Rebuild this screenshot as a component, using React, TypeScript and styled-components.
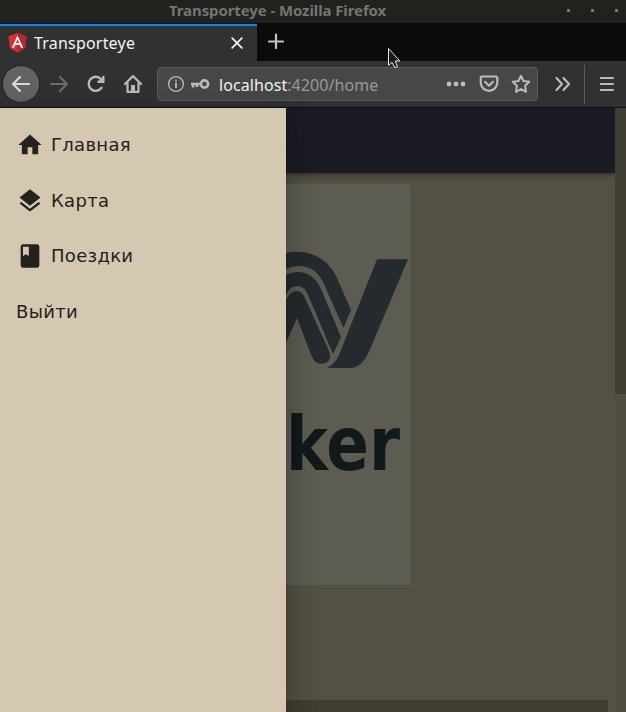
import React from "react";
import styled, { createGlobalStyle } from "styled-components";

const GlobalStyle = createGlobalStyle`
  *, *::before, *::after { box-sizing: border-box; }
  body { margin: 0; overflow: hidden; background: #535044; }
  svg { display: block; }
`;

const Window = styled.div`
  position: relative;
  display: flex;
  flex-direction: column;
  width: 626px;
  height: 712px;
  overflow: hidden;
  font-family: "Noto Sans", sans-serif;
`;

const TitleBar = styled.header`
  display: flex;
  align-items: center;
  height: 23px;
  flex: none;
  padding-left: 169px;
  background: #21211e;
  color: #747471;
`;

const WindowTitle = styled.div`
  width: 384px;
  padding-bottom: 4px;
  font-size: 15px;
  font-weight: 700;
  line-height: 22px;
  letter-spacing: -0.1px;
  white-space: nowrap;
`;

const WindowControls = styled.div`
  display: flex;
  gap: 21px;
  margin: -2px 0 0 14px;
`;

const WindowDot = styled.i`
  width: 3px;
  height: 3px;
  background: #777874;
`;

const TabStrip = styled.div`
  display: flex;
  height: 38px;
  flex: none;
  padding-top: 1px;
  background: #0a0c0b;
`;

const Tab = styled.div`
  display: flex;
  align-items: center;
  width: 257px;
  height: 37px;
  padding: 0 14px 2px 8px;
  border-top: 2px solid #0a84ff;
  background: #303231;
  color: #f3f4f3;
`;

const TabTitle = styled.span`
  flex: 1;
  padding-left: 7px;
  font-size: 16px;
  line-height: 22px;
  letter-spacing: 0.2px;
`;

const NewTab = styled.div`
  padding: 9px 0 0 11px;
`;

const Toolbar = styled.nav`
  display: flex;
  align-items: center;
  height: 47px;
  flex: none;
  border-bottom: 1px solid #101110;
  background: #303231;
  color: #b9bbb9;
`;

const BackButton = styled.div`
  display: grid;
  place-items: center;
  width: 38px;
  height: 38px;
  margin-left: 2px;
  border: 1px solid #232524;
  border-radius: 50%;
  background: #626463;
  color: #d8dad8;
`;

const ToolIcon = styled.div<{ $left: number; $dim?: boolean }>`
  margin-left: ${(p) => p.$left}px;
  color: ${(p) => (p.$dim ? "#6c6e6d" : "inherit")};
`;

const AddressBar = styled.div`
  display: flex;
  align-items: center;
  width: 381px;
  height: 34px;
  margin-left: 14px;
  padding-left: 9px;
  border: 1px solid #5b5d5c;
  border-radius: 4px;
  background: #464847;
`;

const Address = styled.div`
  width: 222px;
  margin-left: 9px;
  padding-top: 2px;
  color: #989a99;
  font-size: 16px;
  line-height: 24px;
  letter-spacing: 0.07px;
`;

const Host = styled.span`
  color: #f2f3f2;
`;

const ToolDivider = styled.div`
  width: 1px;
  height: 39px;
  margin-left: 12px;
  background: #5b5d5c;
`;

const Viewport = styled.main`
  position: relative;
  display: flex;
  flex: 1;
  min-height: 0;
  background: #535044;
`;

const Page = styled.div`
  display: flex;
  flex-direction: column;
  width: 615px;
`;

const AppBar = styled.div`
  height: 65px;
  flex: none;
  background: #1a1b25;
  box-shadow: 0 2px 5px rgba(25, 24, 18, 0.55);
`;

const LogoCard = styled.div`
  width: 410px;
  height: 401px;
  margin-top: 11px;
  flex: none;
  padding-left: 286px;
  border-radius: 4px 4px 0 0;
  background: #5d5c53;
`;

const Footer = styled.div`
  width: 608px;
  height: 12px;
  margin-top: auto;
  background: #403e33;
`;

const ScrollTrack = styled.div`
  width: 11px;
  background: #504e42;
`;

const ScrollThumb = styled.div`
  height: 286px;
  background: #403e33;
`;

const Drawer = styled.aside`
  position: absolute;
  top: 0;
  bottom: 0;
  left: 0;
  display: flex;
  flex-direction: column;
  width: 286px;
  padding: 9.2px 16px;
  background: #d4c8b0;
  box-shadow: 0 8px 10px -5px rgba(0, 0, 0, 0.2), 0 16px 24px 2px rgba(0, 0, 0, 0.14), 0 6px 30px 5px rgba(0, 0, 0, 0.12);
`;

const MenuItem = styled.a`
  display: flex;
  align-items: center;
  gap: 7px;
  height: 55.6px;
  color: #22221e;
  font: 18px/28px "DejaVu Sans", sans-serif;
  letter-spacing: 0.3px;
`;

const Pointer = styled.svg`
  position: absolute;
  left: 387px;
  top: 47px;
`;

const Line = ({ d, size = 20, width = 2.2 }: { d: string; size?: number; width?: number }) => (
  <svg width={size} height={size} viewBox="0 0 20 20" fill="none" stroke="currentColor" strokeWidth={width} strokeLinecap="round" strokeLinejoin="round">
    <path d={d} />
  </svg>
);

const AngularIcon = () => (
  <svg width="19" height="20" viewBox="0 0 19 20">
    <path fill="#dd2d35" d="M9.5 0 18.5 3.2 17 15.2 9.5 19.5 2 15.2.5 3.2Z" />
    <path fill="#bd2430" d="M9.5 0 18.5 3.2 17 15.2 9.5 19.5Z" />
    <path fill="#fff" fillRule="evenodd" d="M9.5 2.4 15.2 14.8H13L11.8 12H7.2L6 14.8H3.8ZM9.5 6.3 7.9 10.2H11.1Z" />
  </svg>
);

const MenuIcon = ({ d }: { d: string }) => (
  <svg width="28" height="28" viewBox="0 0 24 24" fill="currentColor">
    <path d={d} fillRule="evenodd" />
  </svg>
);

const menu = [
  { label: "Главная", icon: "M10 20v-6h4v6h5v-8h3L12 3 2 12h3v8z" },
  { label: "Карта", icon: "M11.99 18.54l-7.37-5.73L3 14.07l9 7 9-7-1.63-1.27-7.38 5.74zM12 16l7.36-5.73L21 9l-9-7-9 7 1.63 1.27L12 16z" },
  { label: "Поездки", icon: "M18 2H6c-1.1 0-2 .9-2 2v16c0 1.1.9 2 2 2h12c1.1 0 2-.9 2-2V4c0-1.1-.9-2-2-2zM6 4h5v8l-2.5-1.5L6 12V4z" },
  { label: "Выйти" },
];

const Logo = () => (
  <svg width="124" height="401" viewBox="286 184 124 401">
    <g fill="#242a2d">
      <path d="M377 259.3H408L371 347Q363 368 350 368H327Q335 364 339 355Z" />
      <path d="M286 253Q303 249 318 257Q329 262 336 276L351 310 343.5 328 323 282Q315 266 299 266Q292 266 286 269Z" />
      <path d="M286 275Q294 270 305 273Q315 276 321 289L341 337 333 354 309 297Q305 286 297 286Q290 286 286 295Z" />
      <path d="M286 300Q290 291 297 291Q302 291 305 298L329 351Q333 362 322 364Q315 364 312 357L297 318 286 343Z" />
    </g>
    <text x="286" y="470" textLength="114" lengthAdjust="spacingAndGlyphs" fill="#11191b" fontFamily="DejaVu Sans, sans-serif" fontSize="75" fontWeight="700">ker</text>
  </svg>
);

export default function App() {
  return (
    <Window>
      <GlobalStyle />
      <TitleBar>
        <WindowTitle>Transporteye - Mozilla Firefox</WindowTitle>
        <WindowControls><WindowDot /><WindowDot /><WindowDot /></WindowControls>
      </TitleBar>
      <TabStrip>
        <Tab>
          <AngularIcon />
          <TabTitle>Transporteye</TabTitle>
          <Line size={12} width={3} d="M2 2 18 18M18 2 2 18" />
        </Tab>
        <NewTab><svg width="16" height="16" stroke="#c0c2c0" strokeWidth="2.2" strokeLinecap="round"><path d="M1 8.5H15M8 1.5V15" /></svg></NewTab>
      </TabStrip>
      <Toolbar>
        <BackButton><Line d="M18 10H2M9 3 2 10 9 17" /></BackButton>
        <ToolIcon $left={9} $dim><Line d="M2 10H18M11 3 18 10 11 17" /></ToolIcon>
        <ToolIcon $left={17}>
          <svg width="20" height="20" viewBox="0 0 20 20" fill="none" stroke="currentColor" strokeWidth="2.4" strokeLinecap="round">
            <path d="M15.5 13.8A7 7 0 1 1 15 5.2" />
            <path d="M18 2V8.5H11.5Z" fill="currentColor" stroke="none" />
            <path d="M17.3 3V7.7H12.5" />
          </svg>
        </ToolIcon>
        <ToolIcon $left={17}>
          <svg width="20" height="20" viewBox="0 0 20 20" fill="none" stroke="currentColor" strokeWidth="2.2" strokeLinecap="round" strokeLinejoin="round">
            <path d="M2 10 10 2 18 10M4.5 9V17.8H15.5V9" />
            <path d="M8 18V11H12V18Z" fill="currentColor" stroke="none" />
          </svg>
        </ToolIcon>
        <AddressBar>
          <svg width="18" height="18" viewBox="0 0 18 18" fill="none" stroke="currentColor" strokeWidth="1.3">
            <circle cx="9" cy="9" r="7.4" />
            <path d="M9 7.8V13M9 4.8V6.5" strokeWidth="1.8" />
          </svg>
          <ToolIcon $left={5}>
            <svg width="20" height="12" viewBox="0 0 20 12" fill="none" stroke="currentColor" strokeWidth="2.6">
              <circle cx="14.5" cy="6" r="3.6" />
              <path d="M11 6H1M3 6V9.5M7 6V9" />
            </svg>
          </ToolIcon>
          <Address><Host>localhost</Host>:4200/home</Address>
          <ToolIcon $left={5}>
            <svg width="20" height="6" fill="currentColor"><circle cx="3" cy="3" r="2.4" /><circle cx="10" cy="3" r="2.4" /><circle cx="17" cy="3" r="2.4" /></svg>
          </ToolIcon>
          <ToolIcon $left={13}><Line d="M3 2.5H17Q18.3 2.5 18.3 4V8.5A8.3 8.3 0 0 1 1.7 8.5V4Q1.7 2.5 3 2.5ZM6 7.8 10 11.8 14 7.8" /></ToolIcon>
          <ToolIcon $left={12}><Line width={2} d="M10 1.8 12.5 7 18.2 7.8 14.1 11.8 15 17.8 10 15 5 17.8 5.9 11.8 1.8 7.8 7.5 7Z" /></ToolIcon>
        </AddressBar>
        <ToolIcon $left={16}>
          <svg width="18" height="20" fill="none" stroke="currentColor" strokeWidth="2.2" strokeLinecap="round" strokeLinejoin="round"><path d="M2.5 4 8 10 2.5 16M9.5 4 15 10 9.5 16" /></svg>
        </ToolIcon>
        <ToolDivider />
        <ToolIcon $left={15}>
          <svg width="14" height="16" stroke="currentColor" strokeWidth="2.2" strokeLinecap="round"><path d="M1 2H13M1 8H13M1 14H13" /></svg>
        </ToolIcon>
      </Toolbar>
      <Viewport>
        <Page>
          <AppBar />
          <LogoCard><Logo /></LogoCard>
          <Footer />
        </Page>
        <ScrollTrack><ScrollThumb /></ScrollTrack>
        <Drawer>
          {menu.map((item) => (
            <MenuItem key={item.label}>
              {item.icon && <MenuIcon d={item.icon} />}
              <span>{item.label}</span>
            </MenuItem>
          ))}
        </Drawer>
      </Viewport>
      <Pointer width="15" height="23" viewBox="0 0 15 23">
        <path d="M1.5 1.5V18.3L5 15.2 8 20.8 10.4 19.5 8.2 14H12.8Z" fill="#171918" stroke="#e8e8e8" strokeWidth="1" />
      </Pointer>
    </Window>
  );
}
